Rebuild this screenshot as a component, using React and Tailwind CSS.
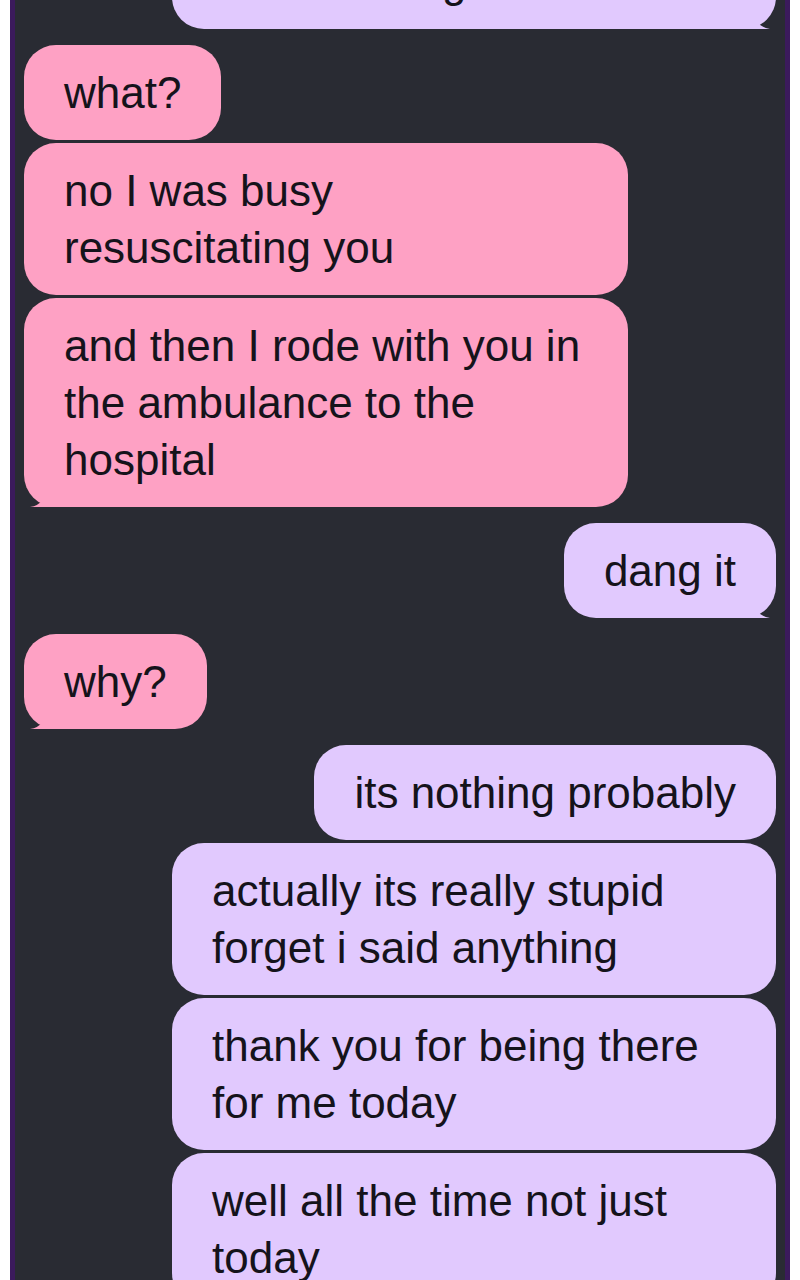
const messages = [
  { from: "me", text: "i just remember the light\nor something", last: true, full: true },
  { from: "them", text: "what?" },
  { from: "them", text: "no I was busy resuscitating you" },
  { from: "them", text: "and then I rode with you in the ambulance to the hospital", last: true },
  { from: "me", text: "dang it", last: true },
  { from: "them", text: "why?", last: true },
  { from: "me", text: "its nothing probably" },
  { from: "me", text: "actually its really stupid forget i said anything" },
  { from: "me", text: "thank you for being there for me today" },
  { from: "me", text: "well all the time not just today", last: true },
];

function Tail({ side, color }) {
  // little hook under the last bubble of a group
  if (side === "left") {
    return (
      <svg className="absolute left-[6px] bottom-0" width="30" height="8" viewBox="0 0 30 8">
        <path d="M0 8 Q8 7 14 0 L30 0 L30 8 Z" fill={color} />
      </svg>
    );
  }
  return (
    <svg className="absolute right-[6px] bottom-0" width="30" height="8" viewBox="0 0 30 8">
      <path d="M30 8 Q22 7 16 0 L0 0 L0 8 Z" fill={color} />
    </svg>
  );
}

function Bubble({ msg }) {
  const mine = msg.from === "me";
  const color = mine ? "#e1c9fe" : "#fea1c4";
  const gap = msg.last ? "mb-4" : "mb-[3px]";
  return (
    <div className={`flex ${mine ? "justify-end" : "justify-start"} ${gap}`}>
      <div
        className={`relative max-w-[604px] whitespace-pre-line rounded-[32px] px-10 py-[19px] text-[44px] leading-[57px] text-[#15131b] ${
          mine ? "bg-[#e1c9fe]" : "bg-[#fea1c4]"
        } ${msg.full ? "w-[604px]" : "w-fit"}`}
      >
        {msg.text}
        {msg.last && <Tail side={mine ? "right" : "left"} color={color} />}
      </div>
    </div>
  );
}

export default function App() {
  return (
    <div className="h-screen bg-white px-[10px] font-['Liberation_Sans',Arial,sans-serif]">
      <div className="h-full overflow-hidden border-x-[5px] border-[#3b1a5c] bg-[#292b33] px-[9px]">
        <div className="-mt-[123px] flex flex-col">
          {messages.map((m, i) => (
            <Bubble key={i} msg={m} />
          ))}
        </div>
      </div>
    </div>
  );
}
